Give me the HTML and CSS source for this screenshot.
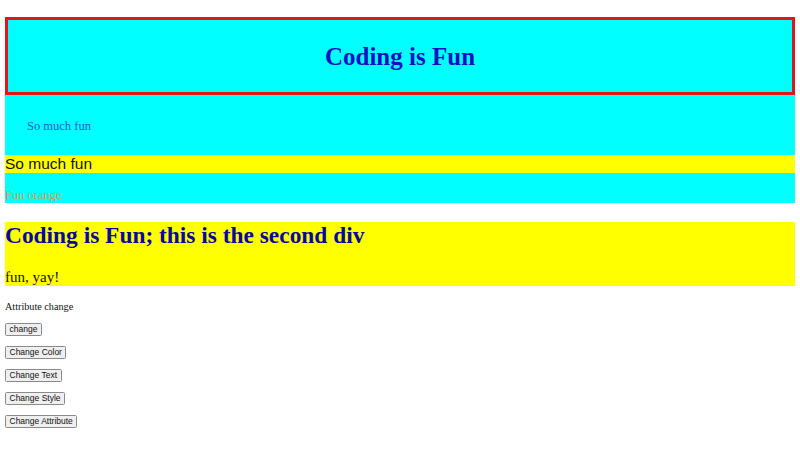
FILE: index.html
```html
<!DOCTYPE html>
<html>
<head>
<meta charset="utf-8">
<title>Coding is Fun</title>
<link rel="stylesheet" href="styles.css">
</head>
<body>
<div class="box1">
  <h1 class="title">Coding is Fun</h1>
  <p class="fun1">So much fun</p>
  <p class="fun2">So much fun</p>
  <p class="orange">Fun orange</p>
</div>
<div class="box2">
  <h1 class="second">Coding is Fun; this is the second div</h1>
  <p class="yay">fun, yay!</p>
</div>
<p class="attr">Attribute change</p>
<p class="btnrow"><button class="btn">change</button></p>
<p class="btnrow"><button class="btn">Change Color</button></p>
<p class="btnrow"><button class="btn">Change Text</button></p>
<p class="btnrow"><button class="btn">Change Style</button></p>
<p class="btnrow"><button class="btn">Change Attribute</button></p>
</body>
</html>
```
FILE: styles.css
```css
html, body {
  background: #ffffff;
}
body {
  margin: 5px;
  font-family: "Liberation Serif", "Times New Roman", serif;
  font-size: 10px;
  color: #111111;
}
.box1 {
  background: #00ffff;
}
.title {
  margin: 12px 0 0;
  border: 3px solid #e0161a;
  padding: 21.5px 0;
  text-align: center;
  font-size: 25px;
  line-height: 29px;
  font-weight: bold;
  color: #1010c0;
}
.fun1 {
  margin: 0;
  padding: 24px 22px 22px;
  font-size: 12.5px;
  line-height: 14px;
  color: #1a5ad0;
}
.fun2 {
  margin: 0;
  background: #ffff00;
  font-family: "Liberation Sans", Arial, sans-serif;
  font-size: 15.5px;
  line-height: 18px;
  color: #111111;
}
.orange {
  margin: 15px 0 0;
  font-size: 12.5px;
  line-height: 15px;
  color: #c8a850;
}
.box2 {
  margin-top: 19px;
  background: #ffff00;
}
.second {
  margin: 0;
  font-size: 23.4px;
  line-height: 27px;
  font-weight: bold;
  color: #0808a0;
}
.yay {
  margin: 20px 0 0;
  font-size: 15px;
  line-height: 17px;
  color: #111111;
}
.attr {
  margin: 15px 0 10px;
  font-size: 10.2px;
  line-height: 11.5px;
}
.btnrow {
  display: flex;
  margin: 10px 0;
}
.btn {
  font-family: "Liberation Sans", Arial, sans-serif;
  font-size: 8.5px;
  line-height: 9px;
  padding: 1px 3.5px;
  border: 1px solid #8a8a8a;
  border-radius: 1.5px;
  background: #efefef;
  color: #111111;
}
```
